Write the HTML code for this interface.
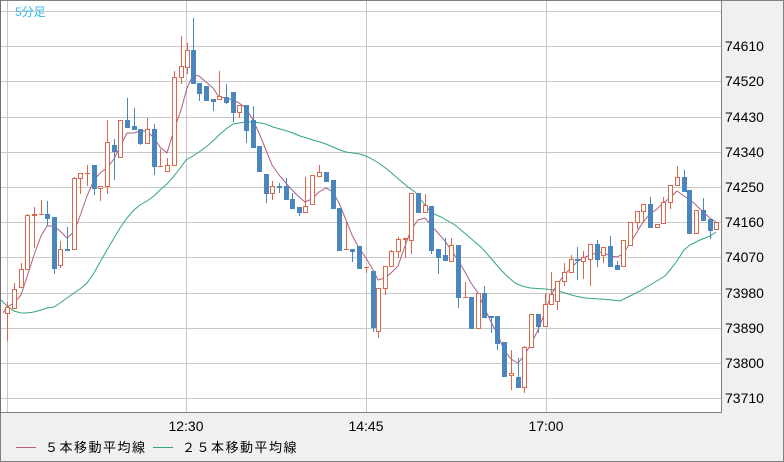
<!DOCTYPE html>
<html><head><meta charset="utf-8"><style>
html,body{margin:0;padding:0;background:#f0f0f0;}
body{width:784px;height:462px;overflow:hidden;position:relative;font-family:"Liberation Sans","Noto Sans CJK JP",sans-serif;}
svg{position:absolute;left:0;top:0;}
</style></head><body>
<svg id="s" width="784" height="462" xmlns="http://www.w3.org/2000/svg" shape-rendering="crispEdges">
<rect x="0" y="0" width="784" height="462" fill="#f0f0f0"/>
<rect x="1" y="1" width="720" height="411" fill="#fff"/>
<g id="grid" stroke="#c8c8c8" stroke-width="1"></g>
<g id="ma"></g>
<g id="c"></g>
<rect x="0.5" y="0.5" width="783" height="461" fill="none" stroke="#808080"/>
<line x1="0" y1="412.5" x2="722" y2="412.5" stroke="#808080"/>
<line x1="721.5" y1="0" x2="721.5" y2="413" stroke="#808080"/>
<line x1="0.5" y1="0" x2="0.5" y2="413" stroke="#707070"/>
<g id="lab" font-family="Liberation Sans, sans-serif" font-size="14" fill="#000"></g>
<text x="15" y="16" font-size="12" fill="#33bbee" font-family="Liberation Sans, Noto Sans CJK JP, sans-serif">5分足</text>
<text x="186" y="431" font-size="14" text-anchor="middle">12:30</text>
<text x="366" y="431" font-size="14" text-anchor="middle">14:45</text>
<text x="546" y="431" font-size="14" text-anchor="middle">17:00</text>
<line x1="16" y1="447.5" x2="36" y2="447.5" stroke="#b06080"/>
<text x="45" y="452" font-size="13" font-family="Liberation Sans, Noto Sans CJK JP, sans-serif" letter-spacing="1.5">５本移動平均線</text>
<line x1="153" y1="447.5" x2="173" y2="447.5" stroke="#30a878"/>
<text x="182" y="452" font-size="13" font-family="Liberation Sans, Noto Sans CJK JP, sans-serif" letter-spacing="1.5">２５本移動平均線</text>
</svg>
<script>
var NS="http://www.w3.org/2000/svg";
function el(p,t,a){var e=document.createElementNS(NS,t);for(var k in a)e.setAttribute(k,a[k]);p.appendChild(e);return e;}
var g=document.getElementById('grid'),lab=document.getElementById('lab');
var ys=[11,46,81,117,152,187,222,257,293,328,363,398];
var labs=[null,74610,74520,74430,74340,74250,74160,74070,73980,73890,73800,73710];
ys.forEach(function(y,i){el(g,'line',{x1:1,y1:y+.5,x2:721,y2:y+.5});
 if(labs[i]){var t=el(lab,'text',{x:725,y:y+5});t.textContent=labs[i];}});
[7,186,366,546].forEach(function(x){el(g,'line',{x1:x+.5,y1:1,x2:x+.5,y2:412});});
var C=[[7,307,313,302,340,1],[14,289,308,283,308,1],[21,269,287,263,287,1],[27,215,269,214,269,1],[34,214,215,207,247,1],[41,214,214,200,214,1],[47,214,218,201,225,0],[54,217,268,217,273,0],[60,249,265,241,267,1],[67,249,249,227,249,0],[74,178,249,177,249,1],[80,173,178,173,193,1],[87,173,173,165,185,1],[94,165,188,165,194,0],[100,186,188,186,200,1],[107,142,186,120,193,1],[114,145,151,139,179,0],[120,120,157,120,157,1],[127,120,127,98,127,0],[134,126,129,108,129,0],[140,129,143,129,144,0],[147,129,143,118,143,1],[154,129,166,124,174,0],[160,166,166,149,166,1],[167,165,171,158,171,1],[174,77,165,71,165,1],[181,66,77,36,83,1],[187,50,67,43,73,1],[193,50,83,18,83,0],[199,83,93,83,100,0],[206,86,100,86,100,0],[213,99,101,99,110,0],[219,96,99,71,99,1],[226,97,102,84,103,0],[233,92,112,92,121,0],[239,105,112,105,117,1],[246,105,130,105,142,0],[253,120,147,106,147,0],[259,146,171,146,171,0],[266,174,193,174,202,0],[272,186,193,181,199,1],[279,186,187,183,192,0],[286,186,199,178,199,0],[292,199,208,193,208,0],[299,207,212,207,215,0],[305,206,212,177,212,1],[312,175,204,175,204,1],[319,172,176,165,176,1],[326,172,181,172,181,0],[333,180,208,180,208,0],[339,208,250,208,250,0],[346,249,249,223,249,1],[352,249,251,249,261,0],[359,246,268,246,268,0],[366,267,267,267,272,1],[373,271,327,271,331,0],[378,288,331,288,337,1],[385,266,288,266,294,1],[391,251,266,250,266,1],[398,239,251,237,257,1],[405,238,239,238,257,1],[411,193,240,193,253,1],[418,193,212,193,212,0],[425,205,212,194,212,1],[431,206,250,206,253,0],[438,249,257,249,273,0],[445,255,260,238,260,0],[451,245,261,238,261,1],[458,245,297,245,307,0],[465,297,297,282,297,1],[471,297,328,297,328,0],[478,293,328,293,328,1],[484,293,317,286,317,0],[491,316,317,316,332,0],[497,316,343,316,349,0],[504,342,376,342,376,0],[511,373,375,350,389,1],[518,377,387,358,387,0],[524,347,387,346,392,1],[531,314,347,314,347,1],[538,314,326,314,332,0],[545,304,326,293,326,1],[551,294,304,272,304,1],[557,281,301,281,309,1],[564,272,281,263,285,1],[571,259,272,255,272,1],[577,259,259,247,279,0],[583,257,261,251,278,1],[590,244,259,244,285,1],[597,244,259,240,266,0],[603,247,255,247,262,1],[610,246,266,236,266,0],[617,265,269,261,269,0],[623,240,266,240,266,1],[630,222,245,222,245,1],[637,211,222,211,228,1],[643,204,211,204,222,1],[650,204,227,197,227,0],[657,224,227,224,227,1],[663,202,223,197,223,1],[670,185,202,185,208,1],[677,177,185,166,185,1],[684,177,191,170,191,0],[689,190,233,190,233,0],[696,210,233,210,233,1],[703,210,220,198,220,0],[710,219,230,219,238,0],[716,222,229,222,229,1]];
var cg=document.getElementById('c');
C.forEach(function(c){var x=c[0],up=c[5],col=up?'#d8674c':'#4a86bd';
 el(cg,'line',{x1:x+.5,y1:c[3],x2:x+.5,y2:c[4]+1,stroke:col});
 if(up){el(cg,'rect',{x:x-1.5,y:c[1]+.5,width:4,height:Math.max(c[2]-c[1],0.01)||0,fill:'#fff',stroke:col});
   if(c[2]-c[1]<1)el(cg,'line',{x1:x-2,y1:c[1]+.5,x2:x+3,y2:c[1]+.5,stroke:col});}
 else{el(cg,'rect',{x:x-2,y:c[1],width:5,height:Math.max(c[2]-c[1],1)+1,fill:col});}
});
var ma5="3,313 7,307 14,303 21,295 27,277 34,255 41,236 47,226 54,226 60,231 67,238 74,232 80,216 87,196 94,180 100,173 107,168 114,159 120,147 127,133 134,133 140,131 147,131 154,138 160,147 167,153 174,130 181,110 187,88 193,75 199,76 206,82 213,88 219,97 226,98 233,100 239,103 246,108 253,120 259,133 266,150 272,165 279,175 286,183 292,190 299,197 305,202 312,199 319,192 326,188 333,192 339,203 346,220 352,235 359,248 366,258 373,270 378,280 385,278 391,273 398,266 405,246 411,230 418,220 425,218 431,225 438,233 445,241 451,250 458,260 465,272 471,283 478,293 484,307 491,322 497,333 504,350 511,359 518,363 524,356 531,344 538,330 545,312 551,295 557,285 564,275 571,268 577,262 583,258 590,255 597,253 603,252 610,256 617,257 623,254 630,243 637,232 643,222 650,214 657,209 663,203 670,198 677,191 684,196 689,199 696,205 703,212 710,218 716,222";
var ma25="1,300 7,306 14,311 21,313 27,313 34,312 41,310 47,308 54,307 60,303 67,298 74,293 80,289 87,283 94,273 100,262 107,250 114,238 120,228 127,218 134,210 140,205 147,201 154,196 160,190 167,184 174,176 181,167 186,160 193,156 199,152 206,147 213,141 219,135 226,129 233,124 239,123 246,122 253,122 260,123 266,124 273,127 280,129 287,131 293,133 300,136 307,138 313,140 320,142 326,144 333,147 340,150 346,152 353,153 360,154 366,156 372,159 380,164 388,170 395,176 402,182 408,187 415,192 421,200 428,209 434,214 441,217 448,221 455,225 462,231 468,236 475,242 482,248 488,255 495,263 501,270 508,277 515,283 522,286 530,288 545,289 555,290 565,293 575,296 585,298 600,299 612,300 620,301 630,296 640,291 650,285 655,282 665,276 670,270 677,261 684,250 690,245 700,240 710,236 716,232";
var mg=document.getElementById('ma');
el(mg,'polyline',{points:ma25,fill:'none',stroke:'#30a878','stroke-width':1,'shape-rendering':'auto'});
el(mg,'polyline',{points:ma5,fill:'none',stroke:'#b05a86','stroke-width':1,'shape-rendering':'auto'});
</script>
</body></html>
